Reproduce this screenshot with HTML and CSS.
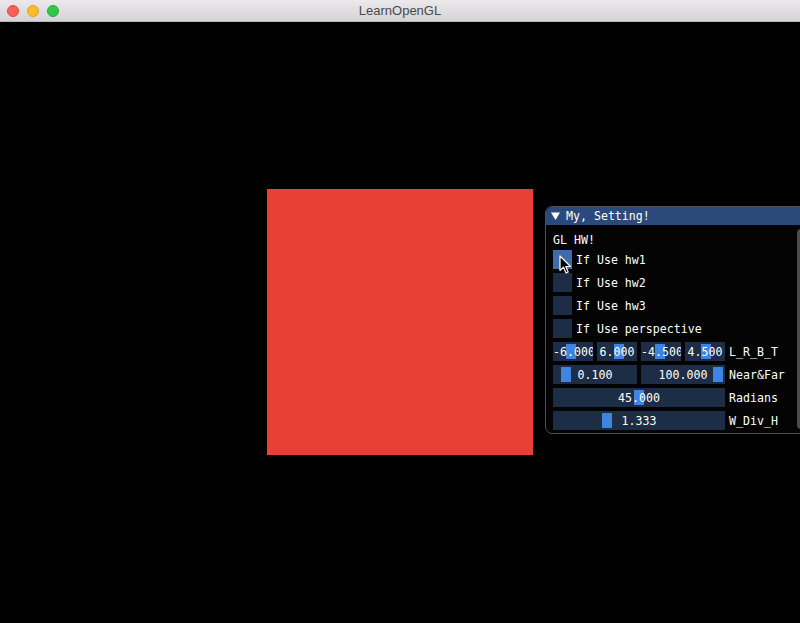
FILE: index.html
```html
<!DOCTYPE html>
<html>
<head>
<meta charset="utf-8">
<title>LearnOpenGL</title>
<link rel="stylesheet" href="styles.css">
</head>
<body>
<div class="app">
  <div class="titlebar">
    <div class="lights">
      <span class="light red"></span>
      <span class="light yellow"></span>
      <span class="light green"></span>
    </div>
    <div class="title">LearnOpenGL</div>
  </div>
  <div class="canvas">
    <div class="quad"></div>
    <div class="imgui">
      <div class="header">
        <svg class="arrow" width="9" height="8" viewBox="0 0 9 8"><polygon points="0,0.5 9,0.5 4.5,8" fill="#fff"/></svg>
        <span>My, Setting!</span>
      </div>
      <div class="content">
        <div class="text">GL HW!</div>
        <div class="row"><div class="check hot"></div><span class="label">If Use hw1</span></div>
        <div class="row"><div class="check"></div><span class="label">If Use hw2</span></div>
        <div class="row"><div class="check"></div><span class="label">If Use hw3</span></div>
        <div class="row"><div class="check"></div><span class="label">If Use perspective</span></div>
        <div class="row">
          <div class="slider w40"><div class="grab" style="left:13px"></div><div class="val">-6.000</div></div>
          <div class="slider w40"><div class="grab" style="left:17px"></div><div class="val">6.000</div></div>
          <div class="slider w40"><div class="grab" style="left:14px"></div><div class="val">-4.500</div></div>
          <div class="slider w40"><div class="grab" style="left:16px"></div><div class="val">4.500</div></div>
          <span class="label">L_R_B_T</span>
        </div>
        <div class="row">
          <div class="slider w84"><div class="grab" style="left:8px"></div><div class="val">0.100</div></div>
          <div class="slider w84"><div class="grab" style="left:72px"></div><div class="val">100.000</div></div>
          <span class="label">Near&amp;Far</span>
        </div>
        <div class="row">
          <div class="slider w172"><div class="grab" style="left:81px"></div><div class="val">45.000</div></div>
          <span class="label">Radians</span>
        </div>
        <div class="row">
          <div class="slider w172"><div class="grab" style="left:49px"></div><div class="val">1.333</div></div>
          <span class="label">W_Div_H</span>
        </div>
      </div>
      <div class="scrollbar"></div>
    </div>
    <svg class="cursor" width="13" height="20" viewBox="0 0 13 20">
      <path d="M1 1 L1 15.5 L4.5 12.2 L7 18 L9.2 17 L6.8 11.5 L11.5 11.5 Z" fill="#000" stroke="#fff" stroke-width="1.2" stroke-linejoin="round"/>
    </svg>
  </div>
</div>
</body>
</html>
```

FILE: styles.css
```css
html, body {
  margin: 0;
  padding: 0;
  background: #000;
}

.app {
  width: 800px;
  height: 623px;
  display: flex;
  flex-direction: column;
  overflow: hidden;
}

.titlebar {
  height: 22px;
  flex: none;
  box-sizing: border-box;
  background: linear-gradient(#ebe9eb, #d5d3d5);
  border-bottom: 1px solid #b9b7b9;
  display: flex;
  align-items: center;
  position: relative;
}

.lights {
  display: flex;
  gap: 8px;
  padding-left: 7px;
}

.light {
  width: 12px;
  height: 12px;
  border-radius: 50%;
  box-sizing: border-box;
}
.light.red { background: #fc5f57; border: 0.5px solid #de4a43; }
.light.yellow { background: #fdbc2e; border: 0.5px solid #dea124; }
.light.green { background: #33c748; border: 0.5px solid #27aa35; }

.title {
  position: absolute;
  left: 0;
  right: 0;
  top: 0;
  line-height: 21px;
  text-align: center;
  font-family: "Liberation Sans", Arial, sans-serif;
  font-size: 13px;
  color: #4a4a4a;
}

.canvas {
  flex: 1;
  background: #000;
  position: relative;
  overflow: hidden;
}

.quad {
  position: absolute;
  left: 267px;
  top: 167px;
  width: 266px;
  height: 266px;
  background: #e94035;
}

.imgui {
  position: absolute;
  left: 545px;
  top: 184px;
  width: 280px;
  height: 228px;
  box-sizing: border-box;
  border: 1px solid #4f4f58;
  border-radius: 7px;
  background: #030303;
  overflow: hidden;
  font-family: "DejaVu Sans Mono", "Liberation Mono", monospace;
  font-size: 11.6px;
  color: #fff;
}

.header {
  height: 18px;
  background: #2b4a7b;
  display: flex;
  align-items: center;
  gap: 6px;
  padding-left: 5px;
  line-height: 13px;
}

.arrow {
  display: block;
  margin-top: -1px;
}

.content {
  padding: 8px 0 0 7px;
  display: flex;
  flex-direction: column;
  gap: 4px;
}

.text {
  height: 13px;
  line-height: 13px;
  padding-top: 1px;
  margin-bottom: -1px;
}

.row {
  display: flex;
  align-items: center;
  gap: 4px;
  height: 19px;
}

.label {
  line-height: 13px;
  padding-top: 1px;
}

.check {
  width: 19px;
  height: 19px;
  background: #1d2d45;
  flex: none;
}

.check.hot {
  background: #3c6cab;
}

.slider {
  height: 19px;
  background: #1d2d45;
  position: relative;
  overflow: hidden;
  flex: none;
}
.w40 { width: 40px; }
.w84 { width: 84px; }
.w172 { width: 172px; }

.grab {
  position: absolute;
  top: 2px;
  width: 10px;
  height: 15px;
  background: #3d85e0;
}

.val {
  position: relative;
  text-align: center;
  white-space: nowrap;
  line-height: 19px;
  padding-top: 1px;
  height: 19px;
}

.scrollbar {
  position: absolute;
  left: 251px;
  top: 22px;
  width: 8px;
  height: 200px;
  background: #4b4b4b;
  border-radius: 4px;
}

.cursor {
  position: absolute;
  left: 559px;
  top: 233px;
}
```
